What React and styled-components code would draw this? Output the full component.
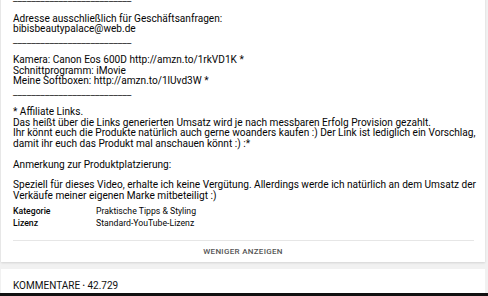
import React from 'react';
import styled, { createGlobalStyle } from 'styled-components';

const GlobalStyle = createGlobalStyle`
  html, body {
    margin: 0;
    padding: 0;
    background: #f1f1f1;
  }
`;

const RULE = '__________________________';

const description = [
  RULE,
  '',
  'Adresse ausschließlich für Geschäftsanfragen:',
  'bibisbeautypalace@web.de',
  RULE,
  '',
  'Kamera: Canon Eos 600D http://amzn.to/1rkVD1K *',
  'Schnittprogramm: iMovie',
  'Meine Softboxen: http://amzn.to/1lUvd3W *',
  RULE,
  '',
  '* Affiliate Links.',
  'Das heißt über die Links generierten Umsatz wird je nach messbaren Erfolg Provision gezahlt.',
  'Ihr könnt euch die Produkte natürlich auch gerne woanders kaufen :) Der Link ist lediglich ein Vorschlag,',
  'damit ihr euch das Produkt mal anschauen könnt :) :*',
  '',
  'Anmerkung zur Produktplatzierung:',
  '',
  'Speziell für dieses Video, erhalte ich keine Vergütung. Allerdings werde ich natürlich an dem Umsatz der Verkäufe meiner eigenen Marke mitbeteiligt :)',
];

const meta = [
  { label: 'Kategorie', value: 'Praktische Tipps & Styling' },
  { label: 'Lizenz', value: 'Standard-YouTube-Lizenz' },
];

const App = () => {
  return (
    <Page>
      <GlobalStyle />
      <Card>
        <Description>
          {description.map((line, i) => (
            <Line key={i} rule={line === RULE}>{line || '\u00a0'}</Line>
          ))}
        </Description>
        <MetaGrid>
          {meta.map(row => (
            <React.Fragment key={row.label}>
              <MetaLabel>{row.label}</MetaLabel>
              <MetaValue>{row.value}</MetaValue>
            </React.Fragment>
          ))}
        </MetaGrid>
        <Divider />
        <ToggleButton>Weniger anzeigen</ToggleButton>
      </Card>
      <CommentsCard>
        <CommentsHeader>
          Kommentare <Dot>•</Dot> 42.729
        </CommentsHeader>
      </CommentsCard>
      <BottomBar />
    </Page>
  );
};

export default App;

const Page = styled.div`
  display: flex;
  flex-direction: column;
  height: 296px;
  overflow: hidden;
  padding: 0 3px 0 1px;
  font-family: Roboto, "Liberation Sans", Arial, sans-serif;
  color: #050505;
`;

const Card = styled.div`
  background: #fff;
  box-shadow: 0 1px 2px rgba(0, 0, 0, 0.12);
  margin-top: -7px;
`;

const Description = styled.div`
  padding: 0 6px 0 12px;
  font-size: 10.1px;
  line-height: 10.4px;
`;

const Line = styled.div`
  white-space: pre-wrap;
  color: ${props => (props.rule ? '#333' : '#050505')};
`;

const MetaGrid = styled.div`
  display: grid;
  grid-template-columns: 83px 1fr;
  padding: 4px 12px 0;
  font-size: 8.7px;
  line-height: 12px;
`;

const MetaLabel = styled.div`
  font-weight: 500;
`;

const MetaValue = styled.div`
  font-weight: 400;
`;

const Divider = styled.div`
  height: 1px;
  background: #e6e6e6;
  margin: 11px 11px 0 12px;
`;

const ToggleButton = styled.div`
  text-align: center;
  font-size: 8px;
  font-weight: 500;
  letter-spacing: 0.3px;
  text-transform: uppercase;
  color: #555;
  padding: 6px 0 6px;
`;

const CommentsCard = styled.div`
  background: #fff;
  margin-top: 7px;
  flex: 1;
  padding: 11px 12px 0;
`;

const CommentsHeader = styled.div`
  font-size: 10px;
  line-height: 12px;
  text-transform: uppercase;
  color: #111;
`;

const Dot = styled.span`
  font-size: 7px;
  vertical-align: 1px;
`;

const BottomBar = styled.div`
  height: 3px;
  margin: 0 -3px 0 -1px;
  background: #111;
  flex-shrink: 0;
`;
